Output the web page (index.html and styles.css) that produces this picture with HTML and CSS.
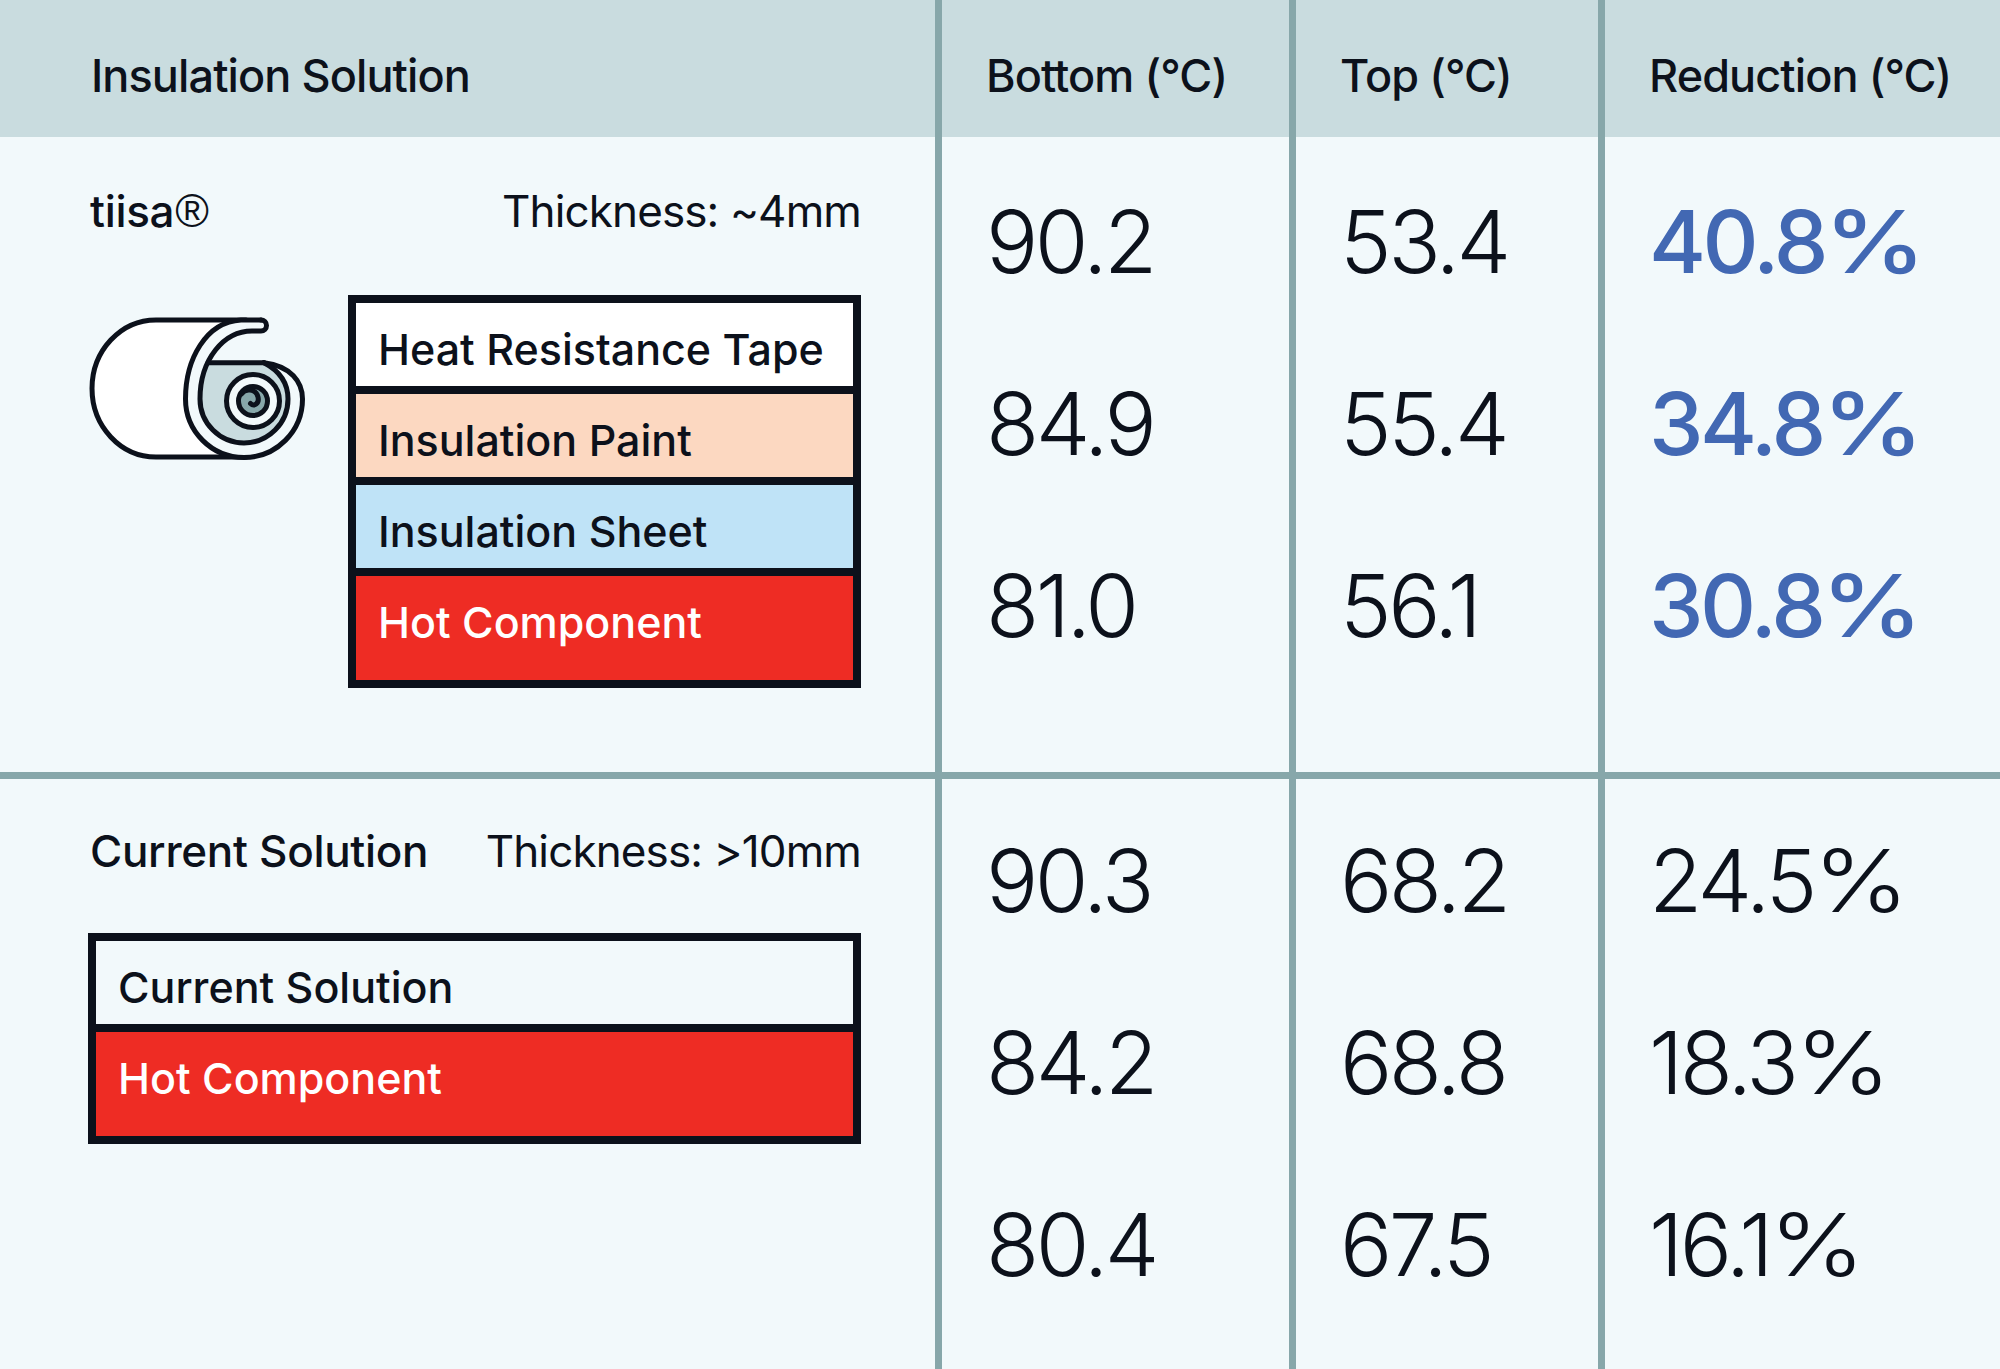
FILE: index.html
```html
<!DOCTYPE html>
<html lang="en">
<head>
<meta charset="utf-8">
<title>Insulation comparison</title>
<link rel="stylesheet" href="styles.css">
</head>
<body>
<div class="table">
  <div class="cell head first">Insulation Solution</div>
  <div class="cell head col">Bottom (°C)</div>
  <div class="cell head col">Top (°C)</div>
  <div class="cell head col">Reduction (°C)</div>

  <div class="cell sol s1">
    <div class="title"><span class="brand">tiisa<span class="reg">®</span></span><span class="thick">Thickness: ~4mm</span></div>
    <div class="figure f1">
      <svg class="roll" viewBox="2 0 230 155" width="230" height="155" aria-hidden="true">
        <defs><clipPath id="below"><rect x="0" y="48.7" width="240" height="120"/></clipPath></defs>
        <g stroke="#0c111b" stroke-width="5" stroke-linejoin="round" stroke-linecap="round">
          <path d="M 160 6 L 70 6 A 64 68.5 0 0 0 70 143 L 160 143 Z" fill="#ffffff"/>
          <path d="M 155 6 C 120 8 99.5 45 99.5 85 A 58.5 58.5 0 0 0 216.5 85 C 216.5 50 200 6 175 6 Z" fill="#f2f9fb" stroke="none"/>
          <path d="M 166 17 C 138 17 114 45 114 85 A 44 44 0 0 0 202 85 C 202 68 192 56 178 48.7 L 178 17 Z" fill="#c9dcdf" stroke="none" clip-path="url(#below)"/>
          <path d="M 175 6 L 155 6 C 120 8 99.5 45 99.5 85 A 58.5 58.5 0 0 0 216.5 85 C 216.5 68 205 52 178 48.7" fill="none"/>
          <path d="M 175 6 A 5.5 5.5 0 0 1 175 17 L 166 17 C 138 17 114 45 114 85 A 44 44 0 0 0 202 85 C 202 68 192 56 178 48.7" fill="none"/>
          <path d="M 122 48.7 L 178 48.7" fill="none"/>
          <circle cx="167" cy="87" r="26.5" fill="#f2f9fb"/>
          <circle cx="167" cy="87" r="14.5" fill="#87a7aa"/>
          <path d="M 155.5 80 C 159 74 170 74.5 172 83 C 173.5 89.5 168 93 164.5 89.5" fill="none" stroke-width="5"/>
        </g>
      </svg>
      <div class="layers l1">
        <div class="layer tape">Heat Resistance Tape</div>
        <div class="layer paint">Insulation Paint</div>
        <div class="layer sheet">Insulation Sheet</div>
        <div class="layer hot">Hot Component</div>
      </div>
    </div>
  </div>
  <div class="cell col nums s1">
    <div class="num">90.2</div>
    <div class="num">84.9</div>
    <div class="num">81.0</div>
  </div>
  <div class="cell col nums s1">
    <div class="num">53.4</div>
    <div class="num">55.4</div>
    <div class="num">56.1</div>
  </div>
  <div class="cell col nums s1">
    <div class="num blue">40.8<span class="pct">%</span></div>
    <div class="num blue">34.8<span class="pct">%</span></div>
    <div class="num blue">30.8<span class="pct">%</span></div>
  </div>

  <div class="cell sol s2">
    <div class="title"><span class="brand">Current Solution</span><span class="thick">Thickness: &gt;10mm</span></div>
    <div class="figure f2">
      <div class="layers l2">
        <div class="layer current">Current Solution</div>
        <div class="layer hot">Hot Component</div>
      </div>
    </div>
  </div>
  <div class="cell col nums s2">
    <div class="num">90.3</div>
    <div class="num">84.2</div>
    <div class="num">80.4</div>
  </div>
  <div class="cell col nums s2">
    <div class="num">68.2</div>
    <div class="num">68.8</div>
    <div class="num">67.5</div>
  </div>
  <div class="cell col nums s2">
    <div class="num">24.5<span class="pct">%</span></div>
    <div class="num">18.3<span class="pct">%</span></div>
    <div class="num">16.1<span class="pct">%</span></div>
  </div>
</div>
</body>
</html>
```

FILE: styles.css
```css
html, body {
  margin: 0;
  padding: 0;
}
body {
  background: #f2f9fb;
  color: #0c111b;
  font-family: Inter, "Noto Sans", "Liberation Sans", sans-serif;
}
.table {
  display: grid;
  grid-template-columns: 935px 354px 309px 402px;
  grid-template-rows: 137px 642px 590px;
  width: 2000px;
  height: 1369px;
  overflow: hidden;
}
.cell {
  box-sizing: border-box;
  min-width: 0;
}
.col {
  border-left: 7px solid #87a7aa;
}
.head {
  background: #c9dcdf;
  font-size: 45px;
  line-height: 45px;
  font-weight: 500;
  letter-spacing: -0.02em;
  padding: 53px 0 0 44px;
  white-space: nowrap;
}
.head.first {
  padding-left: 91px;
}
.s1 {
  border-bottom: 7px solid #87a7aa;
}
.sol {
  padding: 52px 74px 0 88px;
}
.sol.s2 {
  padding-top: 50px;
}
.title {
  display: flex;
  justify-content: space-between;
  padding-left: 2px;
  font-size: 44px;
  line-height: 44px;
  letter-spacing: -0.007em;
  white-space: nowrap;
}
.brand {
  font-weight: 500;
}
.reg {
  font-family: "Liberation Sans", Arial, sans-serif;
  font-size: 1.04em;
  margin-left: 1px;
}
.thick {
  font-weight: 400;
  letter-spacing: -0.02em;
}
.figure {
  display: flex;
  align-items: flex-start;
}
.f1 {
  margin-top: 61px;
  gap: 30px;
}
.f2 {
  margin-top: 60px;
}
.roll {
  display: block;
  margin-top: 19px;
  flex: none;
}
.layers {
  box-sizing: border-box;
  border: 8px solid #0c111b;
}
.l1 {
  width: 514px;
}
.l2 {
  width: 773px;
}
.layer {
  box-sizing: border-box;
  height: 83px;
  padding: 25px 0 0 22px;
  font-size: 43px;
  line-height: 43px;
  font-weight: 500;
  letter-spacing: 0;
  white-space: nowrap;
}
.layer + .layer {
  border-top: 8px solid #0c111b;
  height: 91px;
}
.layer.hot {
  height: 112px;
  background: #ee2c24;
  color: #ffffff;
}
.tape {
  background: #ffffff;
}
.paint {
  background: #fcd8c1;
}
.sheet {
  background: #bfe3f7;
}
.current {
  background: #f2f9fb;
}
.nums {
  padding: 14px 0 0 44px;
}
.nums.s2 {
  padding-top: 11px;
}
.num {
  font-size: 87px;
  line-height: 182px;
  font-weight: 300;
  letter-spacing: -0.04em;
  white-space: nowrap;
}
.num.blue {
  color: #4268b3;
  font-weight: 500;
}
.pct {
  display: inline-block;
  margin-left: -1px;
  transform: scaleX(1.18);
  transform-origin: left center;
}
```
